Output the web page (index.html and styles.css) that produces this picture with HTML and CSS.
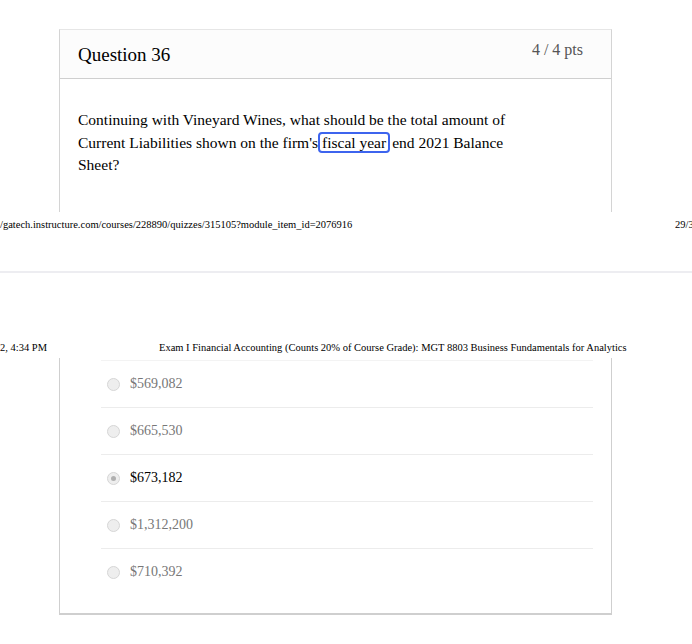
FILE: index.html
```html
<!DOCTYPE html>
<html lang="en">
<head>
<meta charset="utf-8">
<title>Question 36</title>
<link rel="stylesheet" href="styles.css">
</head>
<body>
<section class="sheet sheet-top">
  <div class="card card-top">
    <div class="card-head">
      <h2 class="q-title">Question 36</h2>
      <span class="pts">4 / 4 pts</span>
    </div>
    <div class="card-body">
      <p class="qtext">Continuing with Vineyard Wines, what should be the total amount of Current Liabilities shown on the firm's<span class="hl">fiscal year</span>end 2021 Balance Sheet?</p>
    </div>
  </div>
  <div class="print-line print-foot">
    <span>/gatech.instructure.com/courses/228890/quizzes/315105?module_item_id=2076916</span>
    <span>29/30</span>
  </div>
</section>
<div class="page-gap"></div>
<section class="sheet sheet-bottom">
  <div class="print-line print-head">
    <span class="time">2, 4:34 PM</span>
    <span class="doc-title">Exam I Financial Accounting (Counts 20% of Course Grade): MGT 8803 Business Fundamentals for Analytics</span>
  </div>
  <div class="card card-bottom">
    <ul class="answers">
      <li class="answer"><span class="radio"></span><span class="label">$569,082</span></li>
      <li class="answer"><span class="radio"></span><span class="label">$665,530</span></li>
      <li class="answer selected"><span class="radio"></span><span class="label">$673,182</span></li>
      <li class="answer"><span class="radio"></span><span class="label">$1,312,200</span></li>
      <li class="answer"><span class="radio"></span><span class="label">$710,392</span></li>
    </ul>
  </div>
</section>
</body>
</html>
```
FILE: styles.css
```css
html, body {
  margin: 0;
  padding: 0;
  background: #ffffff;
  overflow: hidden;
}
body {
  font-family: "Liberation Serif", "Times New Roman", serif;
  color: #000;
  width: 692px;
}
.sheet-top {
  padding-top: 29px;
}
.card {
  margin-left: 59px;
  width: 553px;
  box-sizing: border-box;
  border-left: 1px solid #d4d4d4;
  border-right: 1px solid #d4d4d4;
}
.card-top {
  border-top: 1px solid #e6e6e6;
}
.card-head {
  display: flex;
  justify-content: space-between;
  align-items: flex-start;
  height: 48px;
  padding: 0 28px 0 18px;
  background: #fcfcfc;
  border-bottom: 1px solid #cfcfcf;
}
.q-title {
  margin: 0;
  padding-top: 14px;
  font-size: 19px;
  font-weight: normal;
  line-height: 22px;
}
.pts {
  padding-top: 11px;
  font-size: 16px;
  line-height: 18px;
  color: #555;
}
.card-body {
  height: 133px;
  padding: 30px 0 0 18px;
  box-sizing: border-box;
}
.qtext {
  margin: 0;
  width: 445px;
  font-size: 15.5px;
  line-height: 22.5px;
}
.hl {
  display: inline-block;
  margin: 0 2px 0 0;
  padding: 0 2px;
  border: 2px solid #3d64ee;
  border-radius: 4px;
  line-height: 17px;
}
.print-line {
  font-size: 10.5px;
  line-height: 12px;
  white-space: nowrap;
}
.print-foot {
  display: flex;
  justify-content: space-between;
  margin-top: 7px;
  width: 699px;
}
.page-gap {
  margin-top: 40px;
  height: 2px;
  background: #ededf1;
}
.print-head {
  display: grid;
  grid-template-columns: 159px auto;
  margin-top: 69px;
}
.card-bottom {
  margin-top: 4px;
  border-left-color: #cfcfcf;
  border-right-color: #cfcfcf;
  border-bottom: 2px solid #cfcfcf;
  padding: 2px 18px 18px 41px;
}
.answers {
  list-style: none;
  margin: 0;
  padding: 0;
  border-top: 1px solid #f3f3f3;
}
.answer {
  display: flex;
  align-items: center;
  height: 46px;
  padding-left: 6px;
  border-bottom: 1px solid #ececec;
  font-size: 14px;
  color: #777;
}
.answer:last-child {
  border-bottom: none;
}
.answer.selected {
  color: #000;
}
.radio {
  width: 11px;
  height: 11px;
  border-radius: 50%;
  border: 1px solid #d6d6d6;
  background: #eeeeee;
  margin-right: 10px;
  display: flex;
  align-items: center;
  justify-content: center;
  flex: none;
}
.answer.selected .radio::after {
  content: "";
  width: 5px;
  height: 5px;
  border-radius: 50%;
  background: #b0b0b0;
}
```
